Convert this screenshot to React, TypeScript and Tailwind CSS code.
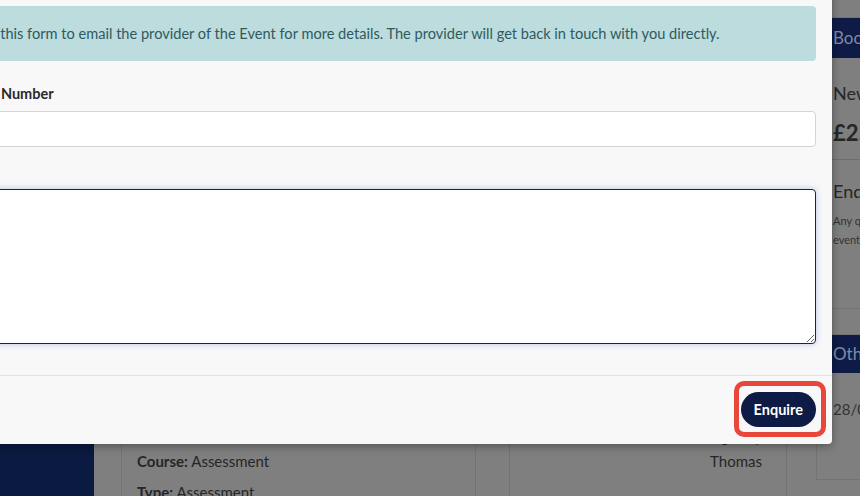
import React from "react";

const font = { fontFamily: "Lato, 'Noto Sans', sans-serif" };

function BackgroundPage() {
  return (
    <div className="flex h-full bg-[#7f7f7f] text-[#262626]">
      {/* sidebar */}
      <aside className="w-[94px] shrink-0 bg-[#0b1a40]" />

      {/* main cards */}
      <div className="flex shrink-0 items-start gap-[33px] pl-[27px] pt-[400px]">
        <div className="h-[200px] w-[355px] border border-[#737373] px-[15px] pt-[50px] text-[15px] leading-[20px]">
          <p>
            <span className="font-bold">Course:</span> Assessment
          </p>
          <p className="mt-[11px]">
            <span className="font-bold">Type:</span> Assessment
          </p>
        </div>
        <div className="h-[200px] w-[278px] border border-[#737373] px-[24px] pt-[25px] text-right text-[15px] leading-[20px]">
          <p>Taught by</p>
          <p className="mt-[5px]">Thomas</p>
        </div>
      </div>

      {/* right column */}
      <div className="ml-[29px] flex w-[260px] shrink-0 flex-col gap-[25px] pt-[17px]">
        <div className="h-[292px] border border-[#737373]">
          <div className="flex h-[40px] items-center bg-[#0e1b47] px-[16px] text-[17px] text-[#7f8aa6]">
            Booking
          </div>
          <div className="px-[16px]">
            <p className="mt-[24px] text-[18px] leading-[22px]">New Delegate</p>
            <p className="mt-[16px] text-[22px] font-bold leading-[26px]">£250.00</p>
          </div>
          <div className="mt-[13px] border-t border-[#6e6e6e] px-[16px]">
            <p className="mt-[20px] text-[18px] leading-[22px]">Enquire</p>
            <p className="mt-[9px] text-[11px] leading-[19px] text-[#333]">
              Any queries
              <br />
              event
            </p>
          </div>
        </div>
        <div className="h-[146px] border border-[#737373]">
          <div className="flex h-[38px] items-center bg-[#0e1b47] px-[16px] text-[17px] text-[#7f8aa6]">
            Other Dates
          </div>
          <p className="mt-[26px] px-[16px] text-[15px] leading-[20px] text-[#333]">28/06/2024</p>
        </div>
      </div>
    </div>
  );
}

function EnquiryModal() {
  return (
    <div className="absolute left-[-60px] top-[-10px] w-[892px] rounded-[4px] bg-[#f8f8f8] shadow-[0_2px_10px_rgba(0,0,0,0.35)]">
      <div className="px-4 pb-[31px] pt-4">
        <div className="rounded-[4px] bg-[#bcdcdd] px-4 py-4 text-[14.6px] leading-[23px] text-[#2f5a5f]">
          Use this form to email the provider of the Event for more details. The provider will get back in touch with you directly.
        </div>

        <label className="mt-[24px] block text-[14.5px] font-bold leading-[18px] text-[#2a2a2a]">
          Phone Number
        </label>
        <input
          type="text"
          className="mt-[8px] block h-[36px] w-full rounded-[4px] border border-[#d4d4d4] bg-white px-3 outline-none"
        />

        <label className="mt-[16px] block text-[14.5px] font-bold leading-[18px] text-[#2a2a2a]">
          Query
        </label>
        <textarea
          className="mt-[8px] block h-[155px] w-full rounded-[4px] border border-[#1a2440] bg-white px-3 shadow-[0_0_6px_rgba(70,100,200,0.35)] outline-none"
          defaultValue=""
        />
      </div>

      <div className="flex justify-end border-t border-[#e2e2e2] px-4 pb-[17px] pt-[16px]">
        <button className="h-[35px] rounded-full bg-[#0d1b45] px-[13px] text-[14.5px] font-bold text-white">
          Enquire
        </button>
      </div>
    </div>
  );
}

export default function App() {
  return (
    <div className="relative h-[496px] w-[860px] overflow-hidden" style={font}>
      <BackgroundPage />
      <EnquiryModal />
      {/* highlight annotation */}
      <div className="pointer-events-none absolute left-[734px] top-[381px] h-[56px] w-[92px] rounded-[10px] border-[5px] border-[#ea473c]" />
    </div>
  );
}
